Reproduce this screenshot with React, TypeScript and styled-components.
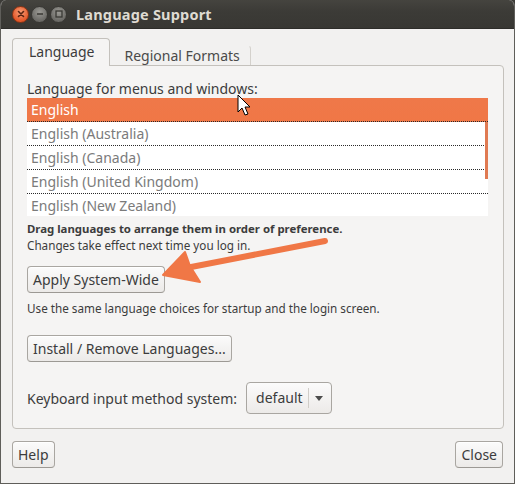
import styled, { createGlobalStyle } from 'styled-components';

const GlobalStyle = createGlobalStyle`
  html, body {
    margin: 0;
    padding: 0;
    background: #3c3b37;
  }
  body {
    font-family: 'Noto Sans', 'DejaVu Sans', sans-serif;
    color: #3c3c3c;
  }
`;

const languages = [
  'English',
  'English (Australia)',
  'English (Canada)',
  'English (United Kingdom)',
  'English (New Zealand)',
];

const App = () => {
  return (
    <>
      <GlobalStyle />
      <Window>
        <TitleBar>
          <WinButtons>
            <WinButton kind="close">
              <svg width="8" height="8" viewBox="0 0 8 8">
                <path d="M1.5 1.5 L6.5 6.5 M6.5 1.5 L1.5 6.5" stroke="#5a2412" strokeWidth="1.6" strokeLinecap="round" />
              </svg>
            </WinButton>
            <WinButton kind="min">
              <svg width="8" height="8" viewBox="0 0 8 8">
                <path d="M1 4 H7" stroke="#3a3935" strokeWidth="1.6" />
              </svg>
            </WinButton>
            <WinButton kind="max">
              <svg width="8" height="8" viewBox="0 0 8 8">
                <rect x="1" y="1" width="6" height="6" fill="none" stroke="#3a3935" strokeWidth="1.3" />
              </svg>
            </WinButton>
          </WinButtons>
          <Title>Language Support</Title>
        </TitleBar>

        <Body>
          <Tabs>
            <Tab active>Language</Tab>
            <Tab>Regional Formats</Tab>
          </Tabs>
          <Panel>
            <Label>Language for menus and windows:</Label>
            <List>
              {languages.map((lang, i) => (
                <Row key={lang} selected={i === 0} last={i === languages.length - 1}>
                  {lang}
                </Row>
              ))}
              <ScrollIndicator />
            </List>
            <Hint bold>Drag languages to arrange them in order of preference.</Hint>
            <Hint>Changes take effect next time you log in.</Hint>
            <Button spaced={13}>Apply System-Wide</Button>
            <Note>Use the same language choices for startup and the login screen.</Note>
            <Button spaced={19}>Install / Remove Languages...</Button>
            <KeyboardRow>
              <span>Keyboard input method system:</span>
              <Combo>
                <ComboText>default</ComboText>
                <ComboArrow>
                  <svg width="8" height="5" viewBox="0 0 8 5">
                    <path d="M0 0 H8 L4 5 Z" fill="#4c4c4c" />
                  </svg>
                </ComboArrow>
              </Combo>
            </KeyboardRow>
          </Panel>
          <Footer>
            <Button>Help</Button>
            <Button>Close</Button>
          </Footer>
        </Body>

        <Overlay width="515" height="484" viewBox="0 0 515 484">
          <path d="M325 241 L186 268" stroke="#f07746" strokeWidth="6" strokeLinecap="round" />
          <path d="M163 275 L185 252 L190 266 L200 282 Z" fill="#f07746" stroke="#f07746" strokeWidth="2" strokeLinejoin="round" />
          <path
            d="M238 95 L238 112 L242 108 L245 115 L248 114 L245 107 L250 107 Z"
            fill="#ffffff"
            stroke="#000000"
            strokeWidth="1"
            strokeLinejoin="round"
          />
        </Overlay>
      </Window>
    </>
  );
};

const Window = styled.div`
  position: relative;
  width: 515px;
  height: 484px;
  box-sizing: border-box;
  background: #f2f1f0;
  border: 1px solid #5f5e5a;
  border-top: none;
  border-radius: 6px 6px 0 0;
  overflow: hidden;
  display: flex;
  flex-direction: column;
`;

const TitleBar = styled.div`
  height: 28px;
  flex-shrink: 0;
  display: flex;
  align-items: center;
  padding-left: 11px;
  background: linear-gradient(#45443f, #3c3b37 40%, #383733);
  border-bottom: 1px solid #2d2c29;
`;

const WinButtons = styled.div`
  display: flex;
  gap: 2px;
  margin-right: 9px;
`;

const WinButton = styled.div<{ kind: 'close' | 'min' | 'max' }>`
  width: 17px;
  height: 17px;
  border-radius: 50%;
  display: flex;
  align-items: center;
  justify-content: center;
  box-sizing: border-box;
  border: 1px solid ${({ kind }) => (kind === 'close' ? '#8a3415' : '#3a3935')};
  background: ${({ kind }) =>
    kind === 'close'
      ? 'radial-gradient(circle at 50% 35%, #f79d76, #e4582a 70%)'
      : 'radial-gradient(circle at 50% 35%, #9b9a95, #6b6a66 70%)'};
`;

const Title = styled.div`
  font-weight: bold;
  font-size: 14.5px;
  color: #dfdbd2;
  letter-spacing: 0.2px;
`;

const Body = styled.div`
  flex: 1;
  display: flex;
  flex-direction: column;
  padding: 9px 10px 0 11px;
  font-size: 14px;
`;

const Tabs = styled.div`
  display: flex;
  align-items: flex-end;
  height: 27px;
`;

const Tab = styled.div<{ active?: boolean }>`
  box-sizing: border-box;
  height: ${({ active }) => (active ? '28px' : '20px')};
  padding: ${({ active }) => (active ? '0 15px 2px 16px' : '0 10px 1px 13px')};
  display: flex;
  align-items: center;
  font-size: 14px;
  color: ${({ active }) => (active ? '#3c3c3c' : '#4a4a4a')};
  background: ${({ active }) => (active ? '#f5f4f3' : 'transparent')};
  border: 1px solid ${({ active }) => (active ? '#c4c1bc' : 'transparent')};
  border-right-color: ${({ active }) => (active ? '#c4c1bc' : '#d4d1cc')};
  border-bottom: none;
  border-radius: 4px 4px 0 0;
  margin-bottom: ${({ active }) => (active ? '-1px' : '0')};
  position: relative;
  z-index: ${({ active }) => (active ? 1 : 0)};
`;

const Panel = styled.div`
  box-sizing: border-box;
  height: 364px;
  display: flex;
  flex-direction: column;
  align-items: flex-start;
  padding: 14px 15px 0 14px;
  background: #f5f4f3;
  border: 1px solid #c4c1bc;
  border-radius: 0 4px 4px 4px;
`;

const Label = styled.div`
  line-height: 18px;
`;

const List = styled.div`
  position: relative;
  align-self: stretch;
  height: 118px;
  overflow: hidden;
  background: #ffffff;
`;

const Row = styled.div<{ selected?: boolean; last?: boolean }>`
  box-sizing: border-box;
  height: 24px;
  line-height: 23px;
  padding-left: 4px;
  color: ${({ selected }) => (selected ? '#ffffff' : '#7b7b7b')};
  background: ${({ selected }) => (selected ? 'linear-gradient(#ef7849, #f07746)' : 'transparent')};
  border-bottom: ${({ last }) => (last ? 'none' : '1px dotted #2a2a2a')};
`;

const ScrollIndicator = styled.div`
  position: absolute;
  right: 0;
  top: 24px;
  width: 3px;
  height: 57px;
  background: #e07a52;
`;

const Hint = styled.div<{ bold?: boolean }>`
  font-size: ${({ bold }) => (bold ? '11.4px' : '11.7px')};
  line-height: 16px;
  font-weight: ${({ bold }) => (bold ? 'bold' : 'normal')};
  margin-top: ${({ bold }) => (bold ? '5px' : '0')};
`;

const Note = styled.div`
  font-size: 11.7px;
  line-height: 16px;
  margin-top: 7px;
`;

const Button = styled.div<{ spaced?: number }>`
  box-sizing: border-box;
  height: 27px;
  padding: 0 5px;
  margin-top: ${({ spaced }) => spaced ?? 0}px;
  display: inline-flex;
  align-items: center;
  font-size: 14px;
  color: #3c3c3c;
  background: linear-gradient(#fbfbfb, #eceae8);
  border: 1px solid #a9a6a1;
  border-bottom-color: #9c9994;
  border-radius: 4px;
  box-shadow: inset 0 1px 0 #ffffff;
`;

const KeyboardRow = styled.div`
  display: flex;
  align-items: center;
  gap: 9px;
  margin-top: 20px;
`;

const Combo = styled.div`
  box-sizing: border-box;
  height: 32px;
  width: 86px;
  display: flex;
  align-items: center;
  padding-left: 9px;
  background: linear-gradient(#fbfbfb, #eceae8);
  border: 1px solid #a9a6a1;
  border-radius: 4px;
`;

const ComboText = styled.span`
  padding-right: 5px;
  border-right: 1px solid #d0cdc8;
  line-height: 20px;
`;

const ComboArrow = styled.span`
  display: flex;
  margin-left: 6px;
`;

const Footer = styled.div`
  display: flex;
  justify-content: space-between;
  margin-top: 12px;
  padding-right: 1px;
`;

const Overlay = styled.svg`
  position: absolute;
  left: -1px;
  top: 0;
  pointer-events: none;
`;

export default App;
